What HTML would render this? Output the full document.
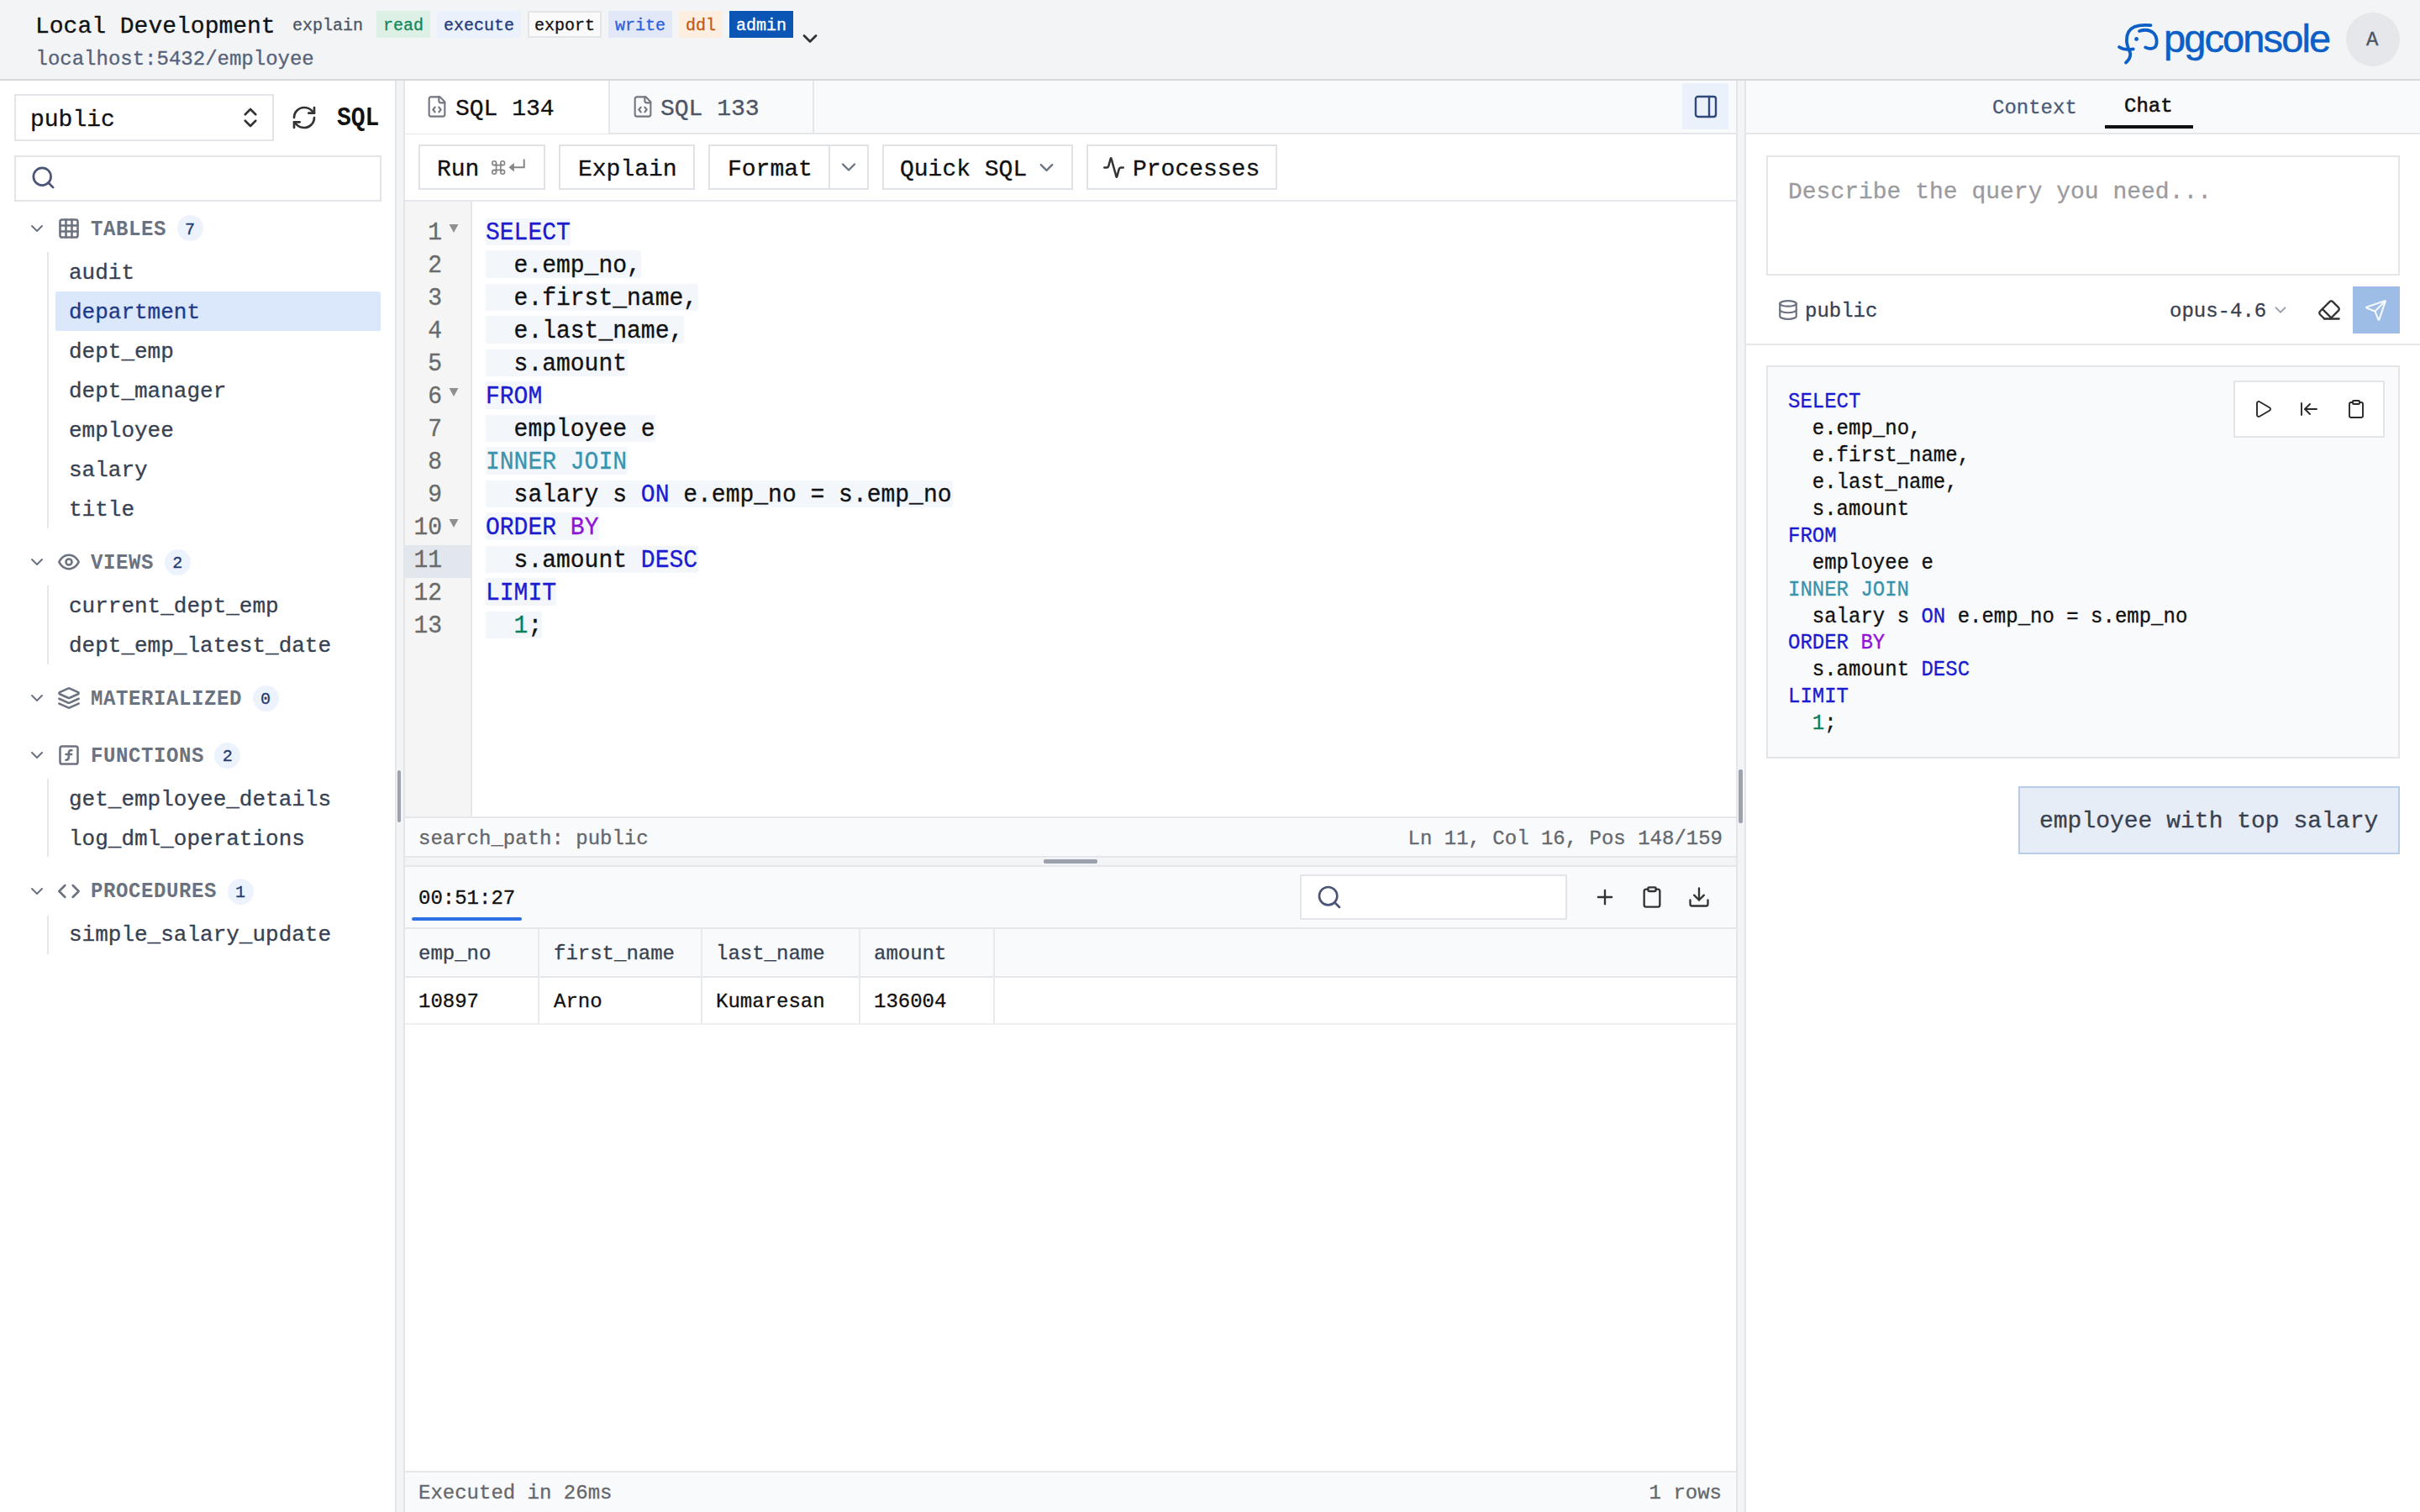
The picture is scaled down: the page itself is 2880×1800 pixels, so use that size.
<!DOCTYPE html>
<html><head><meta charset="utf-8"><title>pgconsole</title>
<style>
html,body{margin:0;padding:0;width:2880px;height:1800px;overflow:hidden;background:#fff}
body{position:relative;font-family:"Liberation Mono",monospace;}
.t{position:absolute;white-space:pre;-webkit-text-stroke:0.3px currentColor}
.r{position:absolute;box-sizing:border-box;}
.i{position:absolute;overflow:visible}
@media (max-width:2000px){html{width:1440px;height:900px}body{zoom:0.5}}
</style></head><body>
<div class="r" style="left:0px;top:0px;width:2880px;height:94px;background:#f3f4f6;"></div>
<div class="r" style="left:0px;top:94px;width:2880px;height:2px;background:#d6d8dc;"></div>
<div class="t" style="left:42.00px;top:17.55px;font-size:28px;line-height:28px;color:#111111;">Local Development</div>
<div class="t" style="left:42.50px;top:58.61px;font-size:24px;line-height:24px;color:#56627a;">localhost:5432/employee</div>
<div class="r" style="left:340px;top:13px;width:100px;height:32px;background:transparent;box-sizing:border-box;"></div>
<div class="t" style="left:348.00px;top:20.68px;font-size:20px;line-height:20px;color:#4b5563;">explain</div>
<div class="r" style="left:448px;top:13px;width:64px;height:32px;background:#dcf0e6;box-sizing:border-box;"></div>
<div class="t" style="left:456.00px;top:20.68px;font-size:20px;line-height:20px;color:#13865a;">read</div>
<div class="r" style="left:520px;top:13px;width:100px;height:32px;background:#eaf0fc;box-sizing:border-box;"></div>
<div class="t" style="left:528.00px;top:20.68px;font-size:20px;line-height:20px;color:#1e3a7b;">execute</div>
<div class="r" style="left:628px;top:13px;width:88px;height:32px;background:#fafafa;border:2px solid #e3e5e8;box-sizing:border-box;"></div>
<div class="t" style="left:636.00px;top:20.68px;font-size:20px;line-height:20px;color:#111111;">export</div>
<div class="r" style="left:724px;top:13px;width:76px;height:32px;background:#e2e8f8;box-sizing:border-box;"></div>
<div class="t" style="left:732.00px;top:20.68px;font-size:20px;line-height:20px;color:#2f5fdc;">write</div>
<div class="r" style="left:808px;top:13px;width:52px;height:32px;background:#fcefe2;box-sizing:border-box;"></div>
<div class="t" style="left:816.00px;top:20.68px;font-size:20px;line-height:20px;color:#c45a12;">ddl</div>
<div class="r" style="left:868px;top:13px;width:76px;height:32px;background:#0b56b5;box-sizing:border-box;"></div>
<div class="t" style="left:876.00px;top:20.68px;font-size:20px;line-height:20px;color:#ffffff;">admin</div>
<svg class="i" style="left:950.30px;top:32.00px" width="28" height="28" viewBox="0 0 24 24" fill="none" stroke="#333" stroke-width="2.4" stroke-linecap="round" stroke-linejoin="round"><path d="m6 9 6 6 6-6"/></svg>
<svg class="i" style="left:2510px;top:20px" width="80" height="64" viewBox="2510 20 80 64" fill="none" stroke="#0b5fc6" stroke-width="3.8" stroke-linecap="round">
<path d="M2559.5 30.2 C2553 29.6 2546 29.5 2540 32 C2533 35 2530.5 42 2531 50 C2531.5 56 2534.5 60 2535.2 63.5 C2535.6 68 2533 72 2530 74.6"/>
<path d="M2522 56 C2526 58.6 2532 59.6 2538.8 58.3"/>
<path d="M2546 37 C2552 35 2559 35.5 2563.5 40 C2567 44 2567.5 51 2565.5 55 C2563 58.5 2557.5 58.5 2553.2 56.4"/>
<circle cx="2542.6" cy="46.5" r="2.4" fill="#0b5fc6" stroke="none"/>
</svg>
<div class="t" style="left:2575px;top:15.5px;font-family:'Liberation Sans',sans-serif;font-size:47px;line-height:60px;color:#0b5fc6;letter-spacing:-1.9px;-webkit-text-stroke:0.5px #0b5fc6">pgconsole</div>
<div class="r" style="left:2792px;top:15px;width:64px;height:64px;background:#e5e7eb;border-radius:32px;"></div>
<div class="t" style="left:2816.00px;top:36.11px;font-size:24px;line-height:24px;color:#4b5563;">A</div>
<div class="r" style="left:0px;top:96px;width:470px;height:1704px;background:#ffffff;"></div>
<div class="r" style="left:470px;top:96px;width:2px;height:1704px;background:#e3e5e9;"></div>
<div class="r" style="left:472px;top:96px;width:8px;height:1704px;background:#f3f4f6;"></div>
<div class="r" style="left:473px;top:917px;width:4px;height:62px;background:#9ca3af;border-radius:2px;"></div>
<div class="r" style="left:17px;top:112px;width:309px;height:56px;background:#ffffff;border:2px solid #e3e5e8;box-sizing:border-box;"></div>
<div class="t" style="left:36.00px;top:128.55px;font-size:28px;line-height:28px;color:#111111;">public</div>
<svg class="i" style="left:283.00px;top:124.80px" width="30" height="30" viewBox="0 0 24 24" fill="none" stroke="#333333" stroke-width="2.1" stroke-linecap="round" stroke-linejoin="round"><path d="m7 15 5 5 5-5"/><path d="m7 9 5-5 5 5"/></svg>
<svg class="i" style="left:346.00px;top:124.00px" width="32" height="32" viewBox="0 0 24 24" fill="none" stroke="#333333" stroke-width="2" stroke-linecap="round" stroke-linejoin="round"><path d="M3 12a9 9 0 0 1 9-9 9.75 9.75 0 0 1 6.74 2.74L21 8"/><path d="M21 3v5h-5"/><path d="M21 12a9 9 0 0 1-9 9 9.75 9.75 0 0 1-6.74-2.74L3 16"/><path d="M8 16H3v5"/></svg>
<div class="t" style="left:401.00px;top:127.55px;font-size:28px;line-height:28px;color:#111111;font-weight:700;-webkit-text-stroke:0;transform:scaleY(1.12);transform-origin:0 21.45px;">SQL</div>
<div class="r" style="left:17px;top:185px;width:437px;height:55px;background:#ffffff;border:2px solid #e3e5e8;box-sizing:border-box;"></div>
<svg class="i" style="left:36.00px;top:196.00px" width="31" height="31" viewBox="0 0 24 24" fill="none" stroke="#4a5578" stroke-width="2.1" stroke-linecap="round" stroke-linejoin="round"><circle cx="11" cy="11" r="8"/><path d="m21 21-4.3-4.3"/></svg>
<svg class="i" style="left:32.00px;top:259.70px" width="24" height="24" viewBox="0 0 24 24" fill="none" stroke="#6b7280" stroke-width="2" stroke-linecap="round" stroke-linejoin="round"><path d="m6 9 6 6 6-6"/></svg>
<svg class="i" style="left:68.00px;top:257.70px" width="28" height="28" viewBox="0 0 24 24" fill="none" stroke="#6b7280" stroke-width="2.2" stroke-linecap="round" stroke-linejoin="round"><rect width="18" height="18" x="3" y="3" rx="2"/><path d="M3 9h18"/><path d="M3 15h18"/><path d="M9 3v18"/><path d="M15 3v18"/></svg>
<div class="t" style="left:108.00px;top:261.61px;font-size:24px;line-height:24px;color:#6b7280;font-weight:700;-webkit-text-stroke:0;letter-spacing:0.6px;transform:scaleY(1.07);transform-origin:0 18.39px;">TABLES</div>
<div class="r" style="left:210.5px;top:256.2px;width:31.0px;height:31.0px;background:#edf3fd;border-radius:16px;"></div>
<div class="t" style="left:220.00px;top:263.88px;font-size:20px;line-height:20px;color:#1e3a70;">7</div>
<div class="r" style="left:56px;top:300px;width:2px;height:329px;background:#e5e7eb;"></div>
<div class="r" style="left:66px;top:347px;width:387px;height:47px;background:#dbe7fb;border-radius:2px;"></div>
<div class="t" style="left:82.00px;top:312.08px;font-size:26px;line-height:26px;color:#374151;">audit</div>
<div class="t" style="left:82.00px;top:359.08px;font-size:26px;line-height:26px;color:#1e3a8a;">department</div>
<div class="t" style="left:82.00px;top:406.08px;font-size:26px;line-height:26px;color:#374151;">dept_emp</div>
<div class="t" style="left:82.00px;top:453.08px;font-size:26px;line-height:26px;color:#374151;">dept_manager</div>
<div class="t" style="left:82.00px;top:500.08px;font-size:26px;line-height:26px;color:#374151;">employee</div>
<div class="t" style="left:82.00px;top:547.08px;font-size:26px;line-height:26px;color:#374151;">salary</div>
<div class="t" style="left:82.00px;top:594.08px;font-size:26px;line-height:26px;color:#374151;">title</div>
<svg class="i" style="left:32.00px;top:657.00px" width="24" height="24" viewBox="0 0 24 24" fill="none" stroke="#6b7280" stroke-width="2" stroke-linecap="round" stroke-linejoin="round"><path d="m6 9 6 6 6-6"/></svg>
<svg class="i" style="left:68.00px;top:655.00px" width="28" height="28" viewBox="0 0 24 24" fill="none" stroke="#6b7280" stroke-width="2.2" stroke-linecap="round" stroke-linejoin="round"><path d="M2 12s3-7 10-7 10 7 10 7-3 7-10 7-10-7-10-7Z"/><circle cx="12" cy="12" r="3"/></svg>
<div class="t" style="left:108.00px;top:658.61px;font-size:24px;line-height:24px;color:#6b7280;font-weight:700;-webkit-text-stroke:0;letter-spacing:0.6px;transform:scaleY(1.07);transform-origin:0 18.39px;">VIEWS</div>
<div class="r" style="left:195.8px;top:653.5px;width:31.0px;height:31.0px;background:#edf3fd;border-radius:16px;"></div>
<div class="t" style="left:205.30px;top:661.18px;font-size:20px;line-height:20px;color:#1e3a70;">2</div>
<div class="r" style="left:56px;top:697px;width:2px;height:94px;background:#e5e7eb;"></div>
<div class="t" style="left:82.00px;top:708.68px;font-size:26px;line-height:26px;color:#374151;">current_dept_emp</div>
<div class="t" style="left:82.00px;top:755.88px;font-size:26px;line-height:26px;color:#374151;">dept_emp_latest_date</div>
<svg class="i" style="left:32.00px;top:819.00px" width="24" height="24" viewBox="0 0 24 24" fill="none" stroke="#6b7280" stroke-width="2" stroke-linecap="round" stroke-linejoin="round"><path d="m6 9 6 6 6-6"/></svg>
<svg class="i" style="left:68.00px;top:817.00px" width="28" height="28" viewBox="0 0 24 24" fill="none" stroke="#6b7280" stroke-width="2.2" stroke-linecap="round" stroke-linejoin="round"><path d="m12.83 2.18a2 2 0 0 0-1.66 0L2.6 6.08a1 1 0 0 0 0 1.83l8.58 3.91a2 2 0 0 0 1.66 0l8.58-3.9a1 1 0 0 0 0-1.83Z"/><path d="m22 17.65-9.17 4.16a2 2 0 0 1-1.66 0L2 17.65"/><path d="m22 12.65-9.17 4.16a2 2 0 0 1-1.66 0L2 12.65"/></svg>
<div class="t" style="left:108.00px;top:820.61px;font-size:24px;line-height:24px;color:#6b7280;font-weight:700;-webkit-text-stroke:0;letter-spacing:0.6px;transform:scaleY(1.07);transform-origin:0 18.39px;">MATERIALIZED</div>
<div class="r" style="left:300.5px;top:815.5px;width:31.0px;height:31.0px;background:#edf3fd;border-radius:16px;"></div>
<div class="t" style="left:310.00px;top:823.18px;font-size:20px;line-height:20px;color:#1e3a70;">0</div>
<svg class="i" style="left:32.00px;top:887.00px" width="24" height="24" viewBox="0 0 24 24" fill="none" stroke="#6b7280" stroke-width="2" stroke-linecap="round" stroke-linejoin="round"><path d="m6 9 6 6 6-6"/></svg>
<svg class="i" style="left:68.00px;top:885.00px" width="28" height="28" viewBox="0 0 24 24" fill="none" stroke="#6b7280" stroke-width="2.2" stroke-linecap="round" stroke-linejoin="round"><rect width="18" height="18" x="3" y="3" rx="2" ry="2"/><path d="M9 17c2 0 2.8-1 2.8-2.8V10c0-2 1-3.3 3.2-3"/><path d="M9 11.2h5.7"/></svg>
<div class="t" style="left:108.00px;top:888.61px;font-size:24px;line-height:24px;color:#6b7280;font-weight:700;-webkit-text-stroke:0;letter-spacing:0.6px;transform:scaleY(1.07);transform-origin:0 18.39px;">FUNCTIONS</div>
<div class="r" style="left:255.3px;top:883.5px;width:31.0px;height:31.0px;background:#edf3fd;border-radius:16px;"></div>
<div class="t" style="left:264.80px;top:891.18px;font-size:20px;line-height:20px;color:#1e3a70;">2</div>
<div class="r" style="left:56px;top:927px;width:2px;height:93px;background:#e5e7eb;"></div>
<div class="t" style="left:82.00px;top:938.58px;font-size:26px;line-height:26px;color:#374151;">get_employee_details</div>
<div class="t" style="left:82.00px;top:985.88px;font-size:26px;line-height:26px;color:#374151;">log_dml_operations</div>
<svg class="i" style="left:32.00px;top:1049.00px" width="24" height="24" viewBox="0 0 24 24" fill="none" stroke="#6b7280" stroke-width="2" stroke-linecap="round" stroke-linejoin="round"><path d="m6 9 6 6 6-6"/></svg>
<svg class="i" style="left:68.00px;top:1047.00px" width="28" height="28" viewBox="0 0 24 24" fill="none" stroke="#6b7280" stroke-width="2.2" stroke-linecap="round" stroke-linejoin="round"><polyline points="16 18 22 12 16 6"/><polyline points="8 6 2 12 8 18"/></svg>
<div class="t" style="left:108.00px;top:1050.21px;font-size:24px;line-height:24px;color:#6b7280;font-weight:700;-webkit-text-stroke:0;letter-spacing:0.6px;transform:scaleY(1.07);transform-origin:0 18.39px;">PROCEDURES</div>
<div class="r" style="left:270.5px;top:1045.5px;width:31.0px;height:31.0px;background:#edf3fd;border-radius:16px;"></div>
<div class="t" style="left:280.00px;top:1053.18px;font-size:20px;line-height:20px;color:#1e3a70;">1</div>
<div class="r" style="left:56px;top:1090px;width:2px;height:46px;background:#e5e7eb;"></div>
<div class="t" style="left:82.00px;top:1100.08px;font-size:26px;line-height:26px;color:#374151;">simple_salary_update</div>
<div class="r" style="left:480px;top:96px;width:1588px;height:1704px;background:#ffffff;"></div>
<div class="r" style="left:480px;top:96px;width:2px;height:1704px;background:#e3e5e9;"></div>
<div class="r" style="left:2066px;top:96px;width:2px;height:1704px;background:#e3e5e9;"></div>
<div class="r" style="left:482px;top:96px;width:1584px;height:63px;background:#f9fafb;"></div>
<div class="r" style="left:482px;top:158px;width:1584px;height:2px;background:#e5e7eb;"></div>
<div class="r" style="left:482px;top:96px;width:243px;height:63px;background:#ffffff;"></div>
<div class="r" style="left:724px;top:96px;width:2px;height:63px;background:#e5e7eb;"></div>
<div class="r" style="left:967px;top:96px;width:2px;height:63px;background:#e5e7eb;"></div>
<svg class="i" style="left:506.00px;top:112.50px" width="28" height="28" viewBox="0 0 24 24" fill="none" stroke="#72767e" stroke-width="1.8" stroke-linecap="round" stroke-linejoin="round"><path d="M10 12.5 8 15l2 2.5"/><path d="m14 12.5 2 2.5-2 2.5"/><path d="M14 2v4a2 2 0 0 0 2 2h4"/><path d="M15 2H6a2 2 0 0 0-2 2v16a2 2 0 0 0 2 2h12a2 2 0 0 0 2-2V7z"/></svg>
<div class="t" style="left:542.00px;top:115.55px;font-size:28px;line-height:28px;color:#111111;">SQL 134</div>
<svg class="i" style="left:750.50px;top:112.50px" width="28" height="28" viewBox="0 0 24 24" fill="none" stroke="#72767e" stroke-width="1.8" stroke-linecap="round" stroke-linejoin="round"><path d="M10 12.5 8 15l2 2.5"/><path d="m14 12.5 2 2.5-2 2.5"/><path d="M14 2v4a2 2 0 0 0 2 2h4"/><path d="M15 2H6a2 2 0 0 0-2 2v16a2 2 0 0 0 2 2h12a2 2 0 0 0 2-2V7z"/></svg>
<div class="t" style="left:786.00px;top:115.55px;font-size:28px;line-height:28px;color:#4b5563;">SQL 133</div>
<div class="r" style="left:2002px;top:99px;width:55px;height:55px;background:#eaf1fb;"></div>
<svg class="i" style="left:2014.00px;top:110.80px" width="32" height="32" viewBox="0 0 24 24" fill="none" stroke="#30497a" stroke-width="1.8" stroke-linecap="round" stroke-linejoin="round"><rect width="18" height="18" x="3" y="3" rx="2"/><path d="M15 3v18"/></svg>
<div class="r" style="left:482px;top:238px;width:1584px;height:2px;background:#e5e7eb;"></div>
<div class="r" style="left:498px;top:172px;width:151px;height:54px;background:#ffffff;border:2px solid #dfe2e6;box-sizing:border-box;"></div>
<div class="t" style="left:520.00px;top:187.55px;font-size:28px;line-height:28px;color:#111111;">Run</div>
<svg class="i" style="left:580px;top:185px" width="50" height="30" viewBox="580 185 50 30" fill="none" stroke="#858585" stroke-width="1.6"><path d="M588.6 196.6H597.8M588.6 202.4H597.8M590.6 194.6V204.4M595.8 194.6V204.4"/><circle cx="588.2" cy="194.2" r="2.4"/><circle cx="598.2" cy="194.2" r="2.4"/><circle cx="588.2" cy="204.8" r="2.4"/><circle cx="598.2" cy="204.8" r="2.4"/><path d="M623.7 189.5V199.3H610" stroke-width="2"/><polygon points="605.5,199.3 611.8,194 611.8,204.6" fill="#858585" stroke="none"/></svg>
<div class="r" style="left:665px;top:172px;width:162px;height:54px;background:#ffffff;border:2px solid #dfe2e6;box-sizing:border-box;"></div>
<div class="t" style="left:688.00px;top:187.55px;font-size:28px;line-height:28px;color:#111111;">Explain</div>
<div class="r" style="left:843px;top:172px;width:191px;height:54px;background:#ffffff;border:2px solid #dfe2e6;box-sizing:border-box;"></div>
<div class="r" style="left:986px;top:172px;width:2px;height:54px;background:#dfe2e6;"></div>
<div class="t" style="left:866.00px;top:187.55px;font-size:28px;line-height:28px;color:#111111;">Format</div>
<svg class="i" style="left:996.00px;top:185.00px" width="28" height="28" viewBox="0 0 24 24" fill="none" stroke="#6b7280" stroke-width="2" stroke-linecap="round" stroke-linejoin="round"><path d="m6 9 6 6 6-6"/></svg>
<div class="r" style="left:1050px;top:172px;width:227px;height:54px;background:#ffffff;border:2px solid #dfe2e6;box-sizing:border-box;"></div>
<div class="t" style="left:1071.00px;top:187.55px;font-size:28px;line-height:28px;color:#111111;">Quick SQL</div>
<svg class="i" style="left:1231.50px;top:185.50px" width="27" height="27" viewBox="0 0 24 24" fill="none" stroke="#6b7280" stroke-width="2" stroke-linecap="round" stroke-linejoin="round"><path d="m6 9 6 6 6-6"/></svg>
<div class="r" style="left:1293px;top:172px;width:227px;height:54px;background:#ffffff;border:2px solid #dfe2e6;box-sizing:border-box;"></div>
<svg class="i" style="left:1311.50px;top:185.50px" width="27" height="27" viewBox="0 0 24 24" fill="none" stroke="#333" stroke-width="2.2" stroke-linecap="round" stroke-linejoin="round"><path d="M22 12h-2.48a2 2 0 0 0-1.93 1.46l-2.35 8.36a.25.25 0 0 1-.48 0L9.24 2.18a.25.25 0 0 0-.48 0l-2.35 8.36A2 2 0 0 1 4.49 12H2"/></svg>
<div class="t" style="left:1348.00px;top:187.55px;font-size:28px;line-height:28px;color:#111111;">Processes</div>
<div class="r" style="left:482px;top:240px;width:79px;height:732px;background:#f5f5f5;"></div>
<div class="r" style="left:560px;top:240px;width:2px;height:732px;background:#e6e6e6;"></div>
<div class="r" style="left:482px;top:649px;width:78px;height:39px;background:#e2e7ee;"></div>
<div class="r" style="left:578px;top:260px;width:101px;height:32px;background:#f3f6fb;border-radius:2px;"></div>
<div class="t" style="left:578px;top:263.55px;font-size:28px;line-height:28px;transform:scaleY(1.06);transform-origin:0 21.45px"><span style="color:#1b1bd0">SELECT</span></div>
<div class="t" style="right:2354.00px;top:263.55px;font-size:28px;line-height:28px;color:#6a6a6a;transform:scaleY(1.08);transform-origin:0 21.45px;">1</div>
<div class="r" style="left:578px;top:298px;width:185px;height:33px;background:#f3f6fb;border-radius:2px;"></div>
<div class="t" style="left:578px;top:302.55px;font-size:28px;line-height:28px;transform:scaleY(1.06);transform-origin:0 21.45px">  <span style="color:#111111">e.emp_no,</span></div>
<div class="t" style="right:2354.00px;top:302.55px;font-size:28px;line-height:28px;color:#6a6a6a;transform:scaleY(1.08);transform-origin:0 21.45px;">2</div>
<div class="r" style="left:578px;top:338px;width:253px;height:32px;background:#f3f6fb;border-radius:2px;"></div>
<div class="t" style="left:578px;top:341.55px;font-size:28px;line-height:28px;transform:scaleY(1.06);transform-origin:0 21.45px">  <span style="color:#111111">e.first_name,</span></div>
<div class="t" style="right:2354.00px;top:341.55px;font-size:28px;line-height:28px;color:#6a6a6a;transform:scaleY(1.08);transform-origin:0 21.45px;">3</div>
<div class="r" style="left:578px;top:376px;width:236px;height:33px;background:#f3f6fb;border-radius:2px;"></div>
<div class="t" style="left:578px;top:380.55px;font-size:28px;line-height:28px;transform:scaleY(1.06);transform-origin:0 21.45px">  <span style="color:#111111">e.last_name,</span></div>
<div class="t" style="right:2354.00px;top:380.55px;font-size:28px;line-height:28px;color:#6a6a6a;transform:scaleY(1.08);transform-origin:0 21.45px;">4</div>
<div class="r" style="left:578px;top:416px;width:169px;height:32px;background:#f3f6fb;border-radius:2px;"></div>
<div class="t" style="left:578px;top:419.55px;font-size:28px;line-height:28px;transform:scaleY(1.06);transform-origin:0 21.45px">  <span style="color:#111111">s.amount</span></div>
<div class="t" style="right:2354.00px;top:419.55px;font-size:28px;line-height:28px;color:#6a6a6a;transform:scaleY(1.08);transform-origin:0 21.45px;">5</div>
<div class="r" style="left:578px;top:454px;width:67px;height:33px;background:#f3f6fb;border-radius:2px;"></div>
<div class="t" style="left:578px;top:458.55px;font-size:28px;line-height:28px;transform:scaleY(1.06);transform-origin:0 21.45px"><span style="color:#1b1bd0">FROM</span></div>
<div class="t" style="right:2354.00px;top:458.55px;font-size:28px;line-height:28px;color:#6a6a6a;transform:scaleY(1.08);transform-origin:0 21.45px;">6</div>
<div class="r" style="left:578px;top:494px;width:202px;height:32px;background:#f3f6fb;border-radius:2px;"></div>
<div class="t" style="left:578px;top:497.55px;font-size:28px;line-height:28px;transform:scaleY(1.06);transform-origin:0 21.45px">  <span style="color:#111111">employee e</span></div>
<div class="t" style="right:2354.00px;top:497.55px;font-size:28px;line-height:28px;color:#6a6a6a;transform:scaleY(1.08);transform-origin:0 21.45px;">7</div>
<div class="r" style="left:578px;top:532px;width:169px;height:33px;background:#f3f6fb;border-radius:2px;"></div>
<div class="t" style="left:578px;top:536.55px;font-size:28px;line-height:28px;transform:scaleY(1.06);transform-origin:0 21.45px"><span style="color:#3a93ad">INNER JOIN</span></div>
<div class="t" style="right:2354.00px;top:536.55px;font-size:28px;line-height:28px;color:#6a6a6a;transform:scaleY(1.08);transform-origin:0 21.45px;">8</div>
<div class="r" style="left:578px;top:572px;width:556px;height:32px;background:#f3f6fb;border-radius:2px;"></div>
<div class="t" style="left:578px;top:575.55px;font-size:28px;line-height:28px;transform:scaleY(1.06);transform-origin:0 21.45px">  <span style="color:#111111">salary s </span><span style="color:#1b1bd0">ON</span><span style="color:#111111"> e.emp_no = s.emp_no</span></div>
<div class="t" style="right:2354.00px;top:575.55px;font-size:28px;line-height:28px;color:#6a6a6a;transform:scaleY(1.08);transform-origin:0 21.45px;">9</div>
<div class="r" style="left:578px;top:610px;width:135px;height:33px;background:#f3f6fb;border-radius:2px;"></div>
<div class="t" style="left:578px;top:614.55px;font-size:28px;line-height:28px;transform:scaleY(1.06);transform-origin:0 21.45px"><span style="color:#1b1bd0">ORDER </span><span style="color:#9013d8">BY</span></div>
<div class="t" style="right:2354.00px;top:614.55px;font-size:28px;line-height:28px;color:#6a6a6a;transform:scaleY(1.08);transform-origin:0 21.45px;">10</div>
<div class="r" style="left:578px;top:650px;width:253px;height:32px;background:#f3f6fb;border-radius:2px;"></div>
<div class="t" style="left:578px;top:653.55px;font-size:28px;line-height:28px;transform:scaleY(1.06);transform-origin:0 21.45px">  <span style="color:#111111">s.amount </span><span style="color:#1b1bd0">DESC</span></div>
<div class="t" style="right:2354.00px;top:653.55px;font-size:28px;line-height:28px;color:#6a6a6a;transform:scaleY(1.08);transform-origin:0 21.45px;">11</div>
<div class="r" style="left:578px;top:688px;width:84px;height:33px;background:#f3f6fb;border-radius:2px;"></div>
<div class="t" style="left:578px;top:692.55px;font-size:28px;line-height:28px;transform:scaleY(1.06);transform-origin:0 21.45px"><span style="color:#1b1bd0">LIMIT</span></div>
<div class="t" style="right:2354.00px;top:692.55px;font-size:28px;line-height:28px;color:#6a6a6a;transform:scaleY(1.08);transform-origin:0 21.45px;">12</div>
<div class="r" style="left:578px;top:728px;width:67px;height:32px;background:#f3f6fb;border-radius:2px;"></div>
<div class="t" style="left:578px;top:731.55px;font-size:28px;line-height:28px;transform:scaleY(1.06);transform-origin:0 21.45px">  <span style="color:#0b7f55">1</span><span style="color:#111111">;</span></div>
<div class="t" style="right:2354.00px;top:731.55px;font-size:28px;line-height:28px;color:#6a6a6a;transform:scaleY(1.08);transform-origin:0 21.45px;">13</div>
<svg class="i" style="left:533px;top:265px" width="14" height="14" viewBox="0 0 14 14"><polygon points="1.5,2 12.5,2 7,12" fill="#8f8f8f"/></svg>
<svg class="i" style="left:533px;top:460px" width="14" height="14" viewBox="0 0 14 14"><polygon points="1.5,2 12.5,2 7,12" fill="#8f8f8f"/></svg>
<svg class="i" style="left:533px;top:616px" width="14" height="14" viewBox="0 0 14 14"><polygon points="1.5,2 12.5,2 7,12" fill="#8f8f8f"/></svg>
<div class="r" style="left:482px;top:972px;width:1584px;height:2px;background:#e5e7eb;"></div>
<div class="r" style="left:482px;top:974px;width:1584px;height:46px;background:#f9fafb;"></div>
<div class="r" style="left:482px;top:1019px;width:1584px;height:2px;background:#e5e7eb;"></div>
<div class="t" style="left:498.00px;top:986.61px;font-size:24px;line-height:24px;color:#64676c;">search_path: public</div>
<div class="t" style="right:830.00px;top:986.61px;font-size:24px;line-height:24px;color:#64676c;">Ln 11, Col 16, Pos 148/159</div>
<div class="r" style="left:482px;top:1021px;width:1584px;height:9px;background:#f3f4f6;"></div>
<div class="r" style="left:1242px;top:1023px;width:64px;height:5px;background:#9aa1ad;border-radius:2px;"></div>
<div class="r" style="left:482px;top:1030px;width:1584px;height:2px;background:#e5e7eb;"></div>
<div class="r" style="left:482px;top:1032px;width:1584px;height:72px;background:#f9fafb;"></div>
<div class="r" style="left:482px;top:1104px;width:1584px;height:2px;background:#e5e7eb;"></div>
<div class="t" style="left:498.00px;top:1057.61px;font-size:24px;line-height:24px;color:#111111;">00:51:27</div>
<div class="r" style="left:490px;top:1092px;width:131px;height:4px;background:#2f6fe4;border-radius:2px;"></div>
<div class="r" style="left:1547px;top:1041px;width:318px;height:54px;background:#ffffff;border:2px solid #e3e5e8;box-sizing:border-box;"></div>
<svg class="i" style="left:1566.40px;top:1051.60px" width="32" height="32" viewBox="0 0 24 24" fill="none" stroke="#4a5578" stroke-width="2" stroke-linecap="round" stroke-linejoin="round"><circle cx="11" cy="11" r="8"/><path d="m21 21-4.3-4.3"/></svg>
<svg class="i" style="left:1896.00px;top:1054.20px" width="28" height="28" viewBox="0 0 24 24" fill="none" stroke="#333" stroke-width="2" stroke-linecap="round" stroke-linejoin="round"><path d="M5 12h14"/><path d="M12 5v14"/></svg>
<svg class="i" style="left:1951.70px;top:1053.70px" width="28" height="28" viewBox="0 0 24 24" fill="none" stroke="#333" stroke-width="2" stroke-linecap="round" stroke-linejoin="round"><rect width="8" height="4" x="8" y="2" rx="1" ry="1"/><path d="M16 4h2a2 2 0 0 1 2 2v14a2 2 0 0 1-2 2H6a2 2 0 0 1-2-2V6a2 2 0 0 1 2-2h2"/></svg>
<svg class="i" style="left:2008.20px;top:1053.70px" width="28" height="28" viewBox="0 0 24 24" fill="none" stroke="#333" stroke-width="2" stroke-linecap="round" stroke-linejoin="round"><path d="M21 15v4a2 2 0 0 1-2 2H5a2 2 0 0 1-2-2v-4"/><polyline points="7 10 12 15 17 10"/><line x1="12" x2="12" y1="15" y2="3"/></svg>
<div class="r" style="left:482px;top:1106px;width:1584px;height:56px;background:#f9fafb;"></div>
<div class="r" style="left:482px;top:1162px;width:1584px;height:2px;background:#e5e7eb;"></div>
<div class="r" style="left:482px;top:1218px;width:1584px;height:2px;background:#eef0f3;"></div>
<div class="r" style="left:640px;top:1106px;width:2px;height:113px;background:#e8eaee;"></div>
<div class="r" style="left:834px;top:1106px;width:2px;height:113px;background:#e8eaee;"></div>
<div class="r" style="left:1022px;top:1106px;width:2px;height:113px;background:#e8eaee;"></div>
<div class="r" style="left:1182px;top:1106px;width:2px;height:113px;background:#e8eaee;"></div>
<div class="t" style="left:498.00px;top:1124.11px;font-size:24px;line-height:24px;color:#374151;">emp_no</div>
<div class="t" style="left:498.00px;top:1180.61px;font-size:24px;line-height:24px;color:#111111;">10897</div>
<div class="t" style="left:659.00px;top:1124.11px;font-size:24px;line-height:24px;color:#374151;">first_name</div>
<div class="t" style="left:659.00px;top:1180.61px;font-size:24px;line-height:24px;color:#111111;">Arno</div>
<div class="t" style="left:852.00px;top:1124.11px;font-size:24px;line-height:24px;color:#374151;">last_name</div>
<div class="t" style="left:852.00px;top:1180.61px;font-size:24px;line-height:24px;color:#111111;">Kumaresan</div>
<div class="t" style="left:1040.00px;top:1124.11px;font-size:24px;line-height:24px;color:#374151;">amount</div>
<div class="t" style="left:1040.00px;top:1180.61px;font-size:24px;line-height:24px;color:#111111;">136004</div>
<div class="r" style="left:482px;top:1751px;width:1584px;height:2px;background:#e5e7eb;"></div>
<div class="r" style="left:482px;top:1753px;width:1584px;height:47px;background:#f9fafb;"></div>
<div class="t" style="left:498.00px;top:1766.11px;font-size:24px;line-height:24px;color:#64676c;">Executed in 26ms</div>
<div class="t" style="right:831.00px;top:1766.11px;font-size:24px;line-height:24px;color:#64676c;">1 rows</div>
<div class="r" style="left:2068px;top:96px;width:8px;height:1704px;background:#f3f4f6;"></div>
<div class="r" style="left:2077px;top:96px;width:803px;height:1704px;background:#ffffff;"></div>
<div class="r" style="left:2076px;top:96px;width:2px;height:1704px;background:#e3e5e9;"></div>
<div class="r" style="left:2069px;top:916px;width:5px;height:64px;background:#9ca3af;border-radius:2px;"></div>
<div class="r" style="left:2078px;top:96px;width:802px;height:63px;background:#f9fafb;"></div>
<div class="r" style="left:2078px;top:158px;width:802px;height:2px;background:#e5e7eb;"></div>
<div class="t" style="left:2371.00px;top:117.21px;font-size:24px;line-height:24px;color:#4b5a75;">Context</div>
<div class="t" style="left:2528.00px;top:114.61px;font-size:24px;line-height:24px;color:#111111;-webkit-text-stroke:0.55px #111;">Chat</div>
<div class="r" style="left:2505px;top:149px;width:105px;height:4px;background:#111111;"></div>
<div class="r" style="left:2102px;top:185px;width:754px;height:143px;background:#ffffff;border:2px solid #e3e5e8;box-sizing:border-box;"></div>
<div class="t" style="left:2128.00px;top:215.25px;font-size:28px;line-height:28px;color:#9a9b9f;">Describe the query you need...</div>
<svg class="i" style="left:2115.00px;top:356.00px" width="26" height="26" viewBox="0 0 24 24" fill="none" stroke="#6b7280" stroke-width="2" stroke-linecap="round" stroke-linejoin="round"><ellipse cx="12" cy="5" rx="9" ry="3"/><path d="M3 5V19A9 3 0 0 0 21 19V5"/><path d="M3 12A9 3 0 0 0 21 12"/></svg>
<div class="t" style="left:2148.00px;top:359.11px;font-size:24px;line-height:24px;color:#374151;">public</div>
<div class="t" style="left:2582.00px;top:359.11px;font-size:24px;line-height:24px;color:#374151;">opus-4.6</div>
<svg class="i" style="left:2703.00px;top:358.00px" width="22" height="22" viewBox="0 0 24 24" fill="none" stroke="#9ca3af" stroke-width="2" stroke-linecap="round" stroke-linejoin="round"><path d="m6 9 6 6 6-6"/></svg>
<svg class="i" style="left:2758.00px;top:355.30px" width="28" height="28" viewBox="0 0 24 24" fill="none" stroke="#333" stroke-width="2" stroke-linecap="round" stroke-linejoin="round"><path d="m7 21-4.3-4.3c-1-1-1-2.5 0-3.4l9.6-9.6c1-1 2.5-1 3.4 0l5.6 5.6c1 1 1 2.5 0 3.4L13 21"/><path d="M22 21H7"/><path d="m5 11 9 9"/></svg>
<div class="r" style="left:2800px;top:341px;width:56px;height:56px;background:#9dbde6;"></div>
<svg class="i" style="left:2814.00px;top:355.50px" width="27" height="27" viewBox="0 0 24 24" fill="none" stroke="rgba(255,255,255,0.9)" stroke-width="1.9" stroke-linecap="round" stroke-linejoin="round"><path d="M14.536 21.686a.5.5 0 0 0 .937-.024l6.5-19a.497.497 0 0 0-.635-.635l-19 6.5a.5.5 0 0 0-.024.937l7.93 3.18a2 2 0 0 1 1.112 1.11z"/><path d="m21.854 2.147-10.94 10.939"/></svg>
<div class="r" style="left:2078px;top:409px;width:802px;height:2px;background:#e5e7eb;"></div>
<div class="r" style="left:2102px;top:435px;width:754px;height:468px;background:#f9fafb;border:2px solid #e3e5e8;box-sizing:border-box;"></div>
<div class="t" style="left:2128px;top:467.11px;font-size:24px;line-height:24px;transform:scaleY(1.06);transform-origin:0 18.39px"><span style="color:#1b1bd0">SELECT</span></div>
<div class="t" style="left:2128px;top:499.04px;font-size:24px;line-height:24px;transform:scaleY(1.06);transform-origin:0 18.39px">  <span style="color:#111111">e.emp_no,</span></div>
<div class="t" style="left:2128px;top:530.97px;font-size:24px;line-height:24px;transform:scaleY(1.06);transform-origin:0 18.39px">  <span style="color:#111111">e.first_name,</span></div>
<div class="t" style="left:2128px;top:562.90px;font-size:24px;line-height:24px;transform:scaleY(1.06);transform-origin:0 18.39px">  <span style="color:#111111">e.last_name,</span></div>
<div class="t" style="left:2128px;top:594.83px;font-size:24px;line-height:24px;transform:scaleY(1.06);transform-origin:0 18.39px">  <span style="color:#111111">s.amount</span></div>
<div class="t" style="left:2128px;top:626.76px;font-size:24px;line-height:24px;transform:scaleY(1.06);transform-origin:0 18.39px"><span style="color:#1b1bd0">FROM</span></div>
<div class="t" style="left:2128px;top:658.69px;font-size:24px;line-height:24px;transform:scaleY(1.06);transform-origin:0 18.39px">  <span style="color:#111111">employee e</span></div>
<div class="t" style="left:2128px;top:690.62px;font-size:24px;line-height:24px;transform:scaleY(1.06);transform-origin:0 18.39px"><span style="color:#3a93ad">INNER JOIN</span></div>
<div class="t" style="left:2128px;top:722.55px;font-size:24px;line-height:24px;transform:scaleY(1.06);transform-origin:0 18.39px">  <span style="color:#111111">salary s </span><span style="color:#1b1bd0">ON</span><span style="color:#111111"> e.emp_no = s.emp_no</span></div>
<div class="t" style="left:2128px;top:754.48px;font-size:24px;line-height:24px;transform:scaleY(1.06);transform-origin:0 18.39px"><span style="color:#1b1bd0">ORDER </span><span style="color:#9013d8">BY</span></div>
<div class="t" style="left:2128px;top:786.41px;font-size:24px;line-height:24px;transform:scaleY(1.06);transform-origin:0 18.39px">  <span style="color:#111111">s.amount </span><span style="color:#1b1bd0">DESC</span></div>
<div class="t" style="left:2128px;top:818.34px;font-size:24px;line-height:24px;transform:scaleY(1.06);transform-origin:0 18.39px"><span style="color:#1b1bd0">LIMIT</span></div>
<div class="t" style="left:2128px;top:850.27px;font-size:24px;line-height:24px;transform:scaleY(1.06);transform-origin:0 18.39px">  <span style="color:#0b7f55">1</span><span style="color:#111111">;</span></div>
<div class="r" style="left:2658px;top:453px;width:180px;height:68px;background:#ffffff;border:2px solid #e3e5e8;box-sizing:border-box;"></div>
<svg class="i" style="left:2680.50px;top:474.80px" width="24" height="24" viewBox="0 0 24 24" fill="none" stroke="#2a2a2a" stroke-width="1.9" stroke-linecap="round" stroke-linejoin="round"><path d="M5 5a2 2 0 0 1 3.008-1.728l11.997 6.998a2 2 0 0 1 .003 3.458l-12 7A2 2 0 0 1 5 19z"/></svg>
<svg class="i" style="left:2735.80px;top:474.80px" width="24" height="24" viewBox="0 0 24 24" fill="none" stroke="#2a2a2a" stroke-width="1.9" stroke-linecap="round" stroke-linejoin="round"><path d="M3 19V5"/><path d="m13 6-6 6 6 6"/><path d="M7 12h14"/></svg>
<svg class="i" style="left:2792.00px;top:474.80px" width="24" height="24" viewBox="0 0 24 24" fill="none" stroke="#2a2a2a" stroke-width="1.9" stroke-linecap="round" stroke-linejoin="round"><rect width="8" height="4" x="8" y="2" rx="1" ry="1"/><path d="M16 4h2a2 2 0 0 1 2 2v14a2 2 0 0 1-2 2H6a2 2 0 0 1-2-2V6a2 2 0 0 1 2-2h2"/></svg>
<div class="r" style="left:2402px;top:936px;width:454px;height:81px;background:#e7edf7;border:2px solid #b8cce8;box-sizing:border-box;"></div>
<div class="t" style="left:2427.00px;top:963.55px;font-size:28px;line-height:28px;color:#374151;">employee with top salary</div>
</body></html>
